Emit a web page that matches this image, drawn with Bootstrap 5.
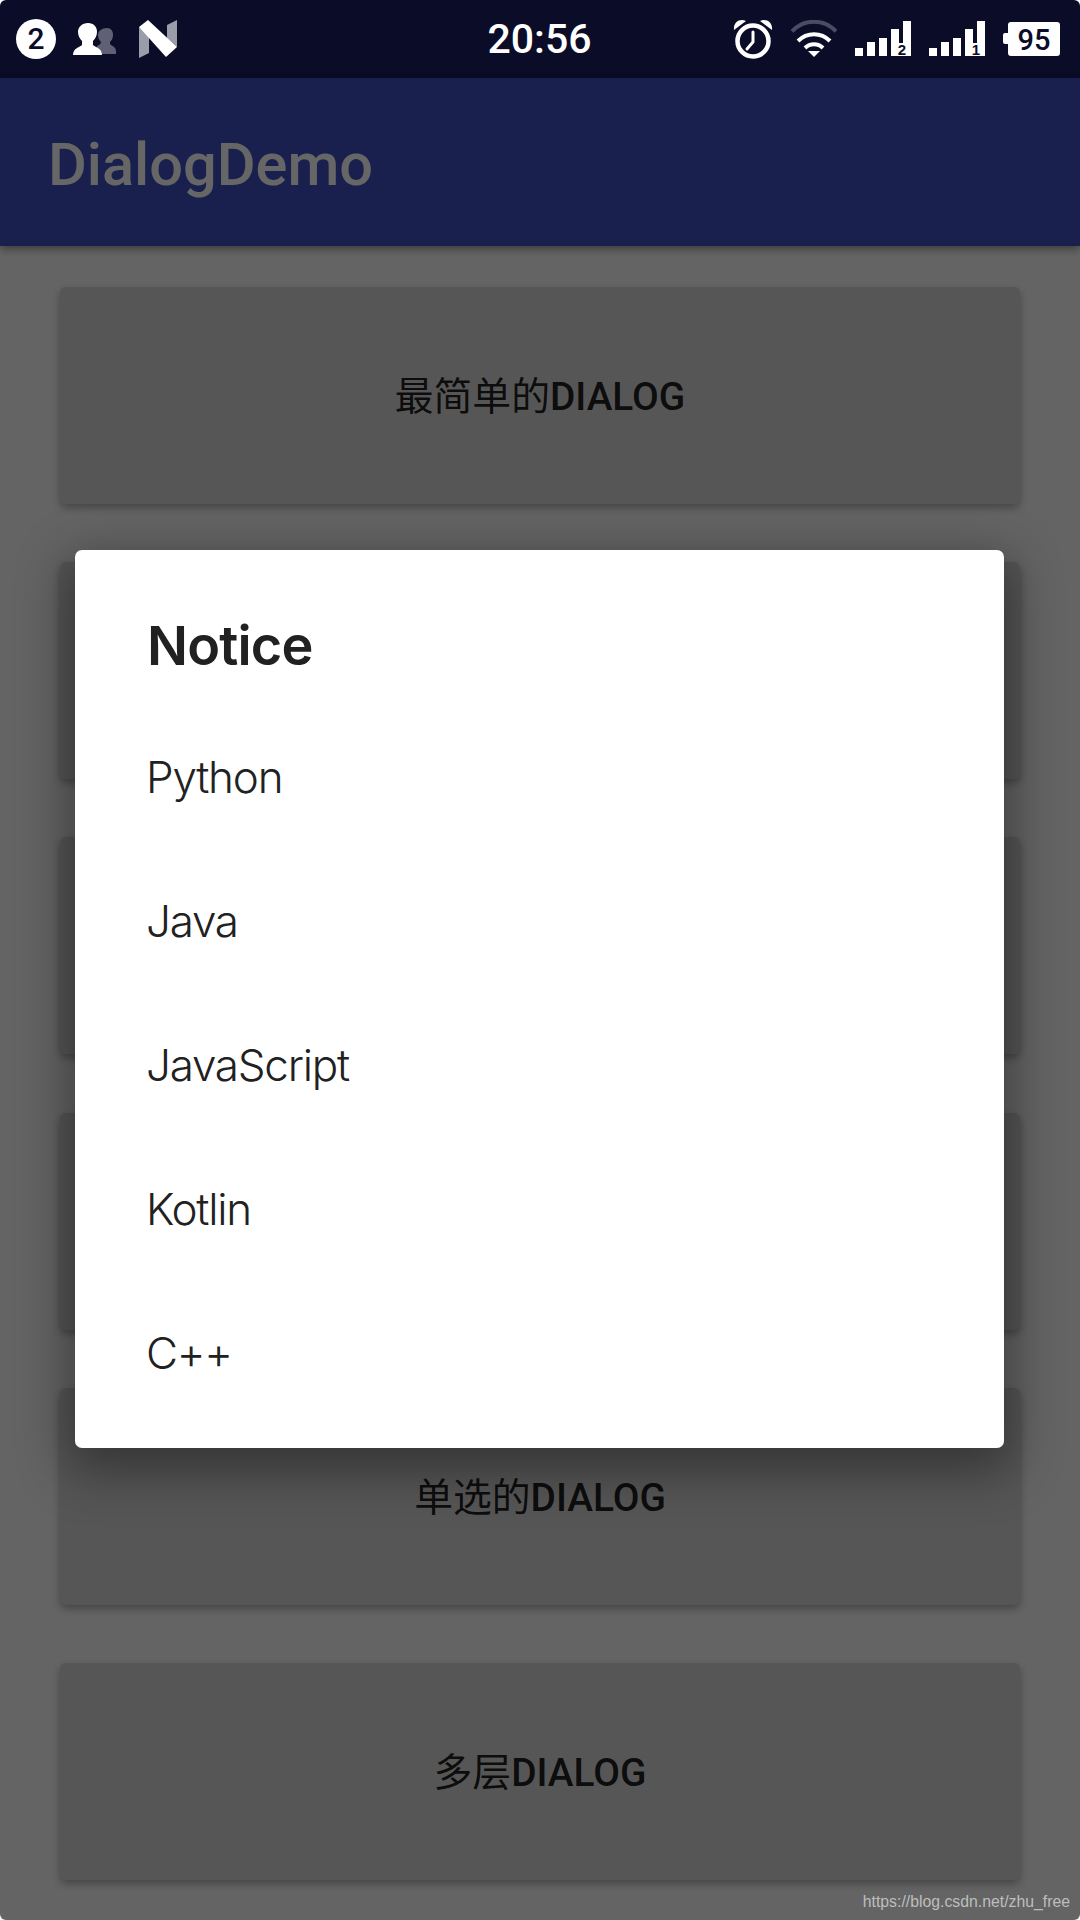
<!doctype html>
<html lang="zh">
<head>
<meta charset="utf-8">
<title>DialogDemo</title>
<link href="https://cdn.jsdelivr.net/npm/bootstrap@5.3.0/dist/css/bootstrap.min.css" rel="stylesheet">
<style>
  html, body { margin: 0; background: #fff; }
  .app-screen { width: 1080px; height: 1920px; overflow: hidden; background: #fafafa; border-radius: 6px; font-family: Roboto, "Noto Sans CJK SC", sans-serif; }
  .status-strip { height: 78px; background: #0a0c28; color: #fff; padding: 0 20px 0 16px; }
  .status-side { flex: 1 1 0; }
  .status-time { font-family: Roboto, sans-serif; font-weight: 500; font-size: 41px; line-height: 1; color: #fff; margin-left: 3px; }
  .badge-num { width: 40px; height: 40px; border-radius: 50%; background: #fff; color: #0a0c28; font: 500 30px/40px Roboto, sans-serif; text-align: center; }
  .people-gap { margin-left: 17px; }
  .n-gap { margin-left: 23px; }
  .right-cluster { gap: 18px; }
  .app-bar { height: 168px; background: #4152c0; padding: 7px 0 0 48px; box-shadow: 0 3px 8px rgba(0,0,0,.4); position: relative; z-index: 1; }
  .app-title { font-size: 59.5px; font-weight: 500; color: #fff; line-height: 1; margin: 0; }
  .btn-stack { padding: 41px 60px 0; gap: 58.2px; }
  .demo-btn { height: 217px; background: #d6d6d6; border: 0; border-radius: 6px; box-shadow: 0 4px 8px rgba(0,0,0,.3); color: rgba(0,0,0,.87); font-size: 38.8px; font-weight: 500; padding: 4px 0 0; }
  .demo-btn .cjk { font-weight: 400; }
  .screen-scrim { top: 78px; left: 0; right: 0; bottom: 0; background: rgba(0,0,0,.6); z-index: 2; }
  .dlg-panel { left: 75px; top: 550px; width: 929px; height: 898px; background: #fff; border: 0; border-radius: 7px; z-index: 3; box-shadow: 0 16px 50px 8px rgba(0,0,0,.38); font-family: Inter, sans-serif; }
  .dlg-title { height: 155px; padding: 64px 0 0 72px; font-family: Inter, sans-serif; font-size: 54px; line-height: 64px; font-weight: 600; letter-spacing: -.015em; color: #212121; margin: 0; }
  .dlg-item { height: 144px; padding: 0 0 0 71px; border: 0; background: transparent; font-size: 44px; font-weight: 300; letter-spacing: -.028em; color: #212121; display: flex; align-items: center; }
  .wm-text { right: 10px; bottom: 8px; font: 15.8px/20px "Liberation Sans", sans-serif; color: #bdbdbd; z-index: 4; }
</style>
</head>
<body>
<div class="app-screen position-relative">
  <div class="status-strip d-flex align-items-center">
    <div class="status-side d-flex align-items-center">
      <div class="badge-num">2</div>
      <svg class="people-gap" width="43" height="32" viewBox="0 0 43 32">
        <path fill="#5f6073" d="M34 5c4 0 6 3 6 7 0 3-1 5-3 7v2c2 2 6 3 6 7v3H24v-8c2-1 4-2 4-4-2-2-3-4-3-7 0-4 4-7 9-7z"/>
        <path fill="#fff" d="M15 0c6 0 9 4 9 9 0 4-2 7-4 9v4c2 2 9 3 9 10H0c0-7 7-8 9-10v-4c-2-2-4-5-4-9 0-5 4-9 10-9z"/>
      </svg>
      <svg class="n-gap" width="38" height="38" viewBox="0 0 38 38">
        <path fill="#9a9ca9" d="M0 7l10 7v19L0 38zM28 5l10-5v27l-10-9z"/>
        <path fill="#fff" d="M0 7L9 0l29 27-11 10z"/>
      </svg>
    </div>
    <div class="status-time">20:56</div>
    <div class="status-side d-flex align-items-center justify-content-end right-cluster">
      <svg width="40" height="40" viewBox="0 0 40 40">
        <circle cx="20" cy="22" r="15.500" fill="none" stroke="#fff" stroke-width="4.500"/>
        <path fill="none" stroke="#fff" stroke-width="3" stroke-linecap="round" d="M20 13v10l-6 7"/>
        <path fill="#fff" d="M1 11C0 3 7-1 13 2zM39 11c1-8-6-12-12-9z"/>
      </svg>
      <svg width="46" height="38" viewBox="0 0 46 38">
        <path fill="none" stroke="#4a4c63" stroke-width="4" d="M1 11.400C13-1.500 33-1.500 45 11.400"/>
        <path fill="none" stroke="#fff" stroke-width="4" d="M7 21C16 12 30 12 39 21"/>
        <path fill="none" stroke="#fff" stroke-width="4" d="M14 28C19 23 27 23 32 28"/>
        <path fill="#fff" d="M17 31h12l-6 6z"/>
      </svg>
      <svg width="56" height="36" viewBox="0 0 56 36">
        <path fill="#fff" d="M0 27h8v8H0zM12 21h8v14h-8zM24 17h8v18h-8zM36 8h8v27h-8zM48 0h8v35h-8zM36 22h20v13H36z"/>
        <text x="47" y="33.500" text-anchor="middle" font-family="Liberation Sans" font-weight="700" font-size="15" fill="#0a0c28">2</text>
      </svg>
      <svg width="56" height="36" viewBox="0 0 56 36">
        <path fill="#fff" d="M0 27h8v8H0zM12 21h8v14h-8zM24 17h8v18h-8zM36 8h8v27h-8zM48 0h8v35h-8zM36 22h20v13H36z"/>
        <text x="47" y="33.500" text-anchor="middle" font-family="Liberation Sans" font-weight="700" font-size="15" fill="#0a0c28">1</text>
      </svg>
      <svg width="57" height="34" viewBox="0 0 57 34">
        <path fill="#fff" d="M8 0h46a3 3 0 0 1 3 3v28a3 3 0 0 1-3 3H8a3 3 0 0 1-3-3V22H2a2 2 0 0 1-2-2v-7a2 2 0 0 1 2-2h3V3a3 3 0 0 1 3-3z"/>
        <text x="31" y="27.500" text-anchor="middle" font-family="Roboto" font-weight="500" font-size="29" fill="#0a0c28">95</text>
      </svg>
    </div>
  </div>

  <div class="app-bar d-flex align-items-center">
    <h1 class="app-title">DialogDemo</h1>
  </div>

  <div class="btn-stack d-flex flex-column">
    <button class="btn demo-btn" type="button"><span class="cjk">最简单的</span>DIALOG</button>
    <button class="btn demo-btn" type="button"></button>
    <button class="btn demo-btn" type="button"></button>
    <button class="btn demo-btn" type="button"></button>
    <button class="btn demo-btn" type="button"><span class="cjk">单选的</span>DIALOG</button>
    <button class="btn demo-btn" type="button"><span class="cjk">多层</span>DIALOG</button>
  </div>

  <div class="screen-scrim position-absolute"></div>

  <div class="dlg-panel card position-absolute">
    <h2 class="dlg-title">Notice</h2>
    <div class="list-group list-group-flush">
      <div class="list-group-item dlg-item">Python</div>
      <div class="list-group-item dlg-item">Java</div>
      <div class="list-group-item dlg-item">JavaScript</div>
      <div class="list-group-item dlg-item">Kotlin</div>
      <div class="list-group-item dlg-item">C++</div>
    </div>
  </div>

  <div class="wm-text position-absolute">https://blog.csdn.net/zhu_free</div>
</div>
<script src="https://cdn.jsdelivr.net/npm/bootstrap@5.3.0/dist/js/bootstrap.bundle.min.js"></script>
</body>
</html>
